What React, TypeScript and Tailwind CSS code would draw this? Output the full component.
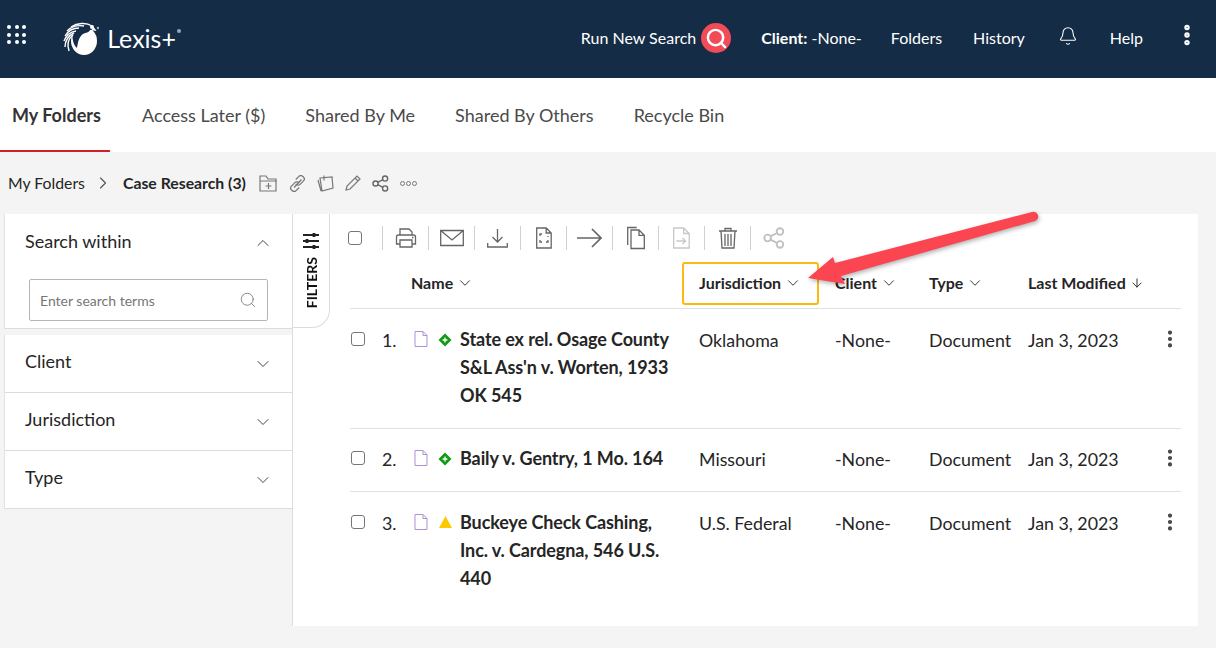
import React from 'react'
import { ChevronDown, ChevronUp, ChevronRight, Search, Bell, EllipsisVertical, ArrowDown } from 'lucide-react'

const rows = [
  { n: '1.', title: "State ex rel. Osage County S&L Ass'n v. Worten, 1933 OK 545", juris: 'Oklahoma', signal: 'green', h: 'h-[120px]', pt: 'pt-[17px]' },
  { n: '2.', title: 'Baily v. Gentry, 1 Mo. 164', juris: 'Missouri', signal: 'green', h: 'h-[63px]', pt: 'pt-[16px]' },
  { n: '3.', title: 'Buckeye Check Cashing, Inc. v. Cardegna, 546 U.S. 440', juris: 'U.S. Federal', signal: 'yellow', h: 'h-[120px]', pt: 'pt-[17px]' },
]

function ToolCell({ children }: { children: React.ReactNode }) {
  return (
    <>
      <span className="w-px h-6 bg-[#d0d0d0] shrink-0" />
      <span className="w-[45px] shrink-0 flex items-center justify-center">{children}</span>
    </>
  )
}

function Check({ className = '' }: { className?: string }) {
  return <span className={`block w-[14px] h-[14px] shrink-0 rounded-[3px] border border-[#767676] bg-white ${className}`} />
}

function Ico({ children, w = 24, h = 24, c = '#666' }: { children: React.ReactNode; w?: number; h?: number; c?: string }) {
  return (
    <svg width={w} height={h} viewBox={`0 0 ${w} ${h}`} fill="none" stroke={c} strokeWidth="1.3">
      {children}
    </svg>
  )
}

function ShareIcon({ c = '#666', size = 24 }: { c?: string; size?: number }) {
  return (
    <svg width={size} height={size} viewBox="0 0 24 24" fill="none" stroke={c} strokeWidth="2">
      <circle cx="18.500" cy="5" r="3.600" />
      <circle cx="5" cy="12" r="3.600" />
      <circle cx="18.500" cy="19" r="3.600" />
      <path d="M8 10.300 15.500 6.600M8 13.700l7.500 3.700" />
    </svg>
  )
}

function FilterRow({ label }: { label: string }) {
  return (
    <div className="h-[58px] border-b border-[#dcdcdc] flex items-center justify-between pl-5 pr-[19px] pb-[4px] text-[18px] text-[#252525]">
      {label}
      <ChevronDown size={20} strokeWidth={1.2} className="text-[#444] mt-[5px]" />
    </div>
  )
}

function HeadCell({ label, className = '' }: { label: string; className?: string }) {
  return (
    <span className={`flex items-center gap-[3px] whitespace-nowrap ${className}`}>
      {label} <ChevronDown size={18} strokeWidth={1.2} />
    </span>
  )
}

function DocIcon() {
  return (
    <svg width="14" height="16" viewBox="0 0 14 16" fill="none" stroke="#b08fd8" strokeWidth="1">
      <path d="M1 .5h8l4 4v11H1zM9 .5v4h4" />
    </svg>
  )
}

function Signal({ kind }: { kind: string }) {
  if (kind === 'yellow') {
    return (
      <svg width="13" height="12" viewBox="0 0 13 12">
        <path d="M6.500 0 13 12H0z" fill="#fcc800" />
      </svg>
    )
  }
  return (
    <svg width="14" height="14" viewBox="0 0 14 14">
      <path d="M7 .5 13.500 7 7 13.500.5 7z" fill="#119a14" />
      <path d="M7 4.600v4.800M4.600 7h4.800" stroke="#fff" strokeWidth="1.300" />
    </svg>
  )
}

function LexisLogo() {
  return (
    <svg width="36" height="34" viewBox="0 0 36 34" className="shrink-0">
      <ellipse cx="21" cy="19" rx="13" ry="14" fill="#fff" />
      <path d="M9 4C14 1 23 0 28 3l3 4-4 1c-1 3-4 2-7 4-3 2-5 6-6 14C9 22 8 11 12 6z" fill="#152c46" />
      <g fill="none" stroke="#fff" strokeWidth="1.400">
        <path d="M8 5c6-4 15-5 21-1l3 4-3-.5" />
        <path d="M4 9c5-5 11-6 17-5" />
        <path d="M2 14c3-5 8-8 14-8" />
        <path d="M1 19c2-5 6-9 12-10" />
        <path d="M2 25c0-6 3-11 9-14" />
        <path d="M6 29C4 23 5 17 10 13" />
      </g>
      <circle cx="29" cy="5" r="2" fill="#fff" />
      <circle cx="35" cy="6" r="1.300" fill="#9aa7b5" />
    </svg>
  )
}

export default function App() {
  return (
    <div className="relative w-[1216px] h-[648px] overflow-hidden bg-[#f4f4f4] font-['Lato',sans-serif] text-[#252525]">
      <header className="h-[78px] bg-[#152c46] flex items-center text-white text-[16px]">
        <div className="ml-[7px] mb-[9px] grid grid-cols-3 gap-x-[3.600px] gap-y-[3.600px]">
          {Array.from({ length: 9 }).map((_, i) => (
            <span key={i} className="w-[4px] h-[4px] rounded-full bg-white" />
          ))}
        </div>
        <span className="ml-[37px] flex"><LexisLogo /></span>
        <span className="ml-[8px] text-[25px] font-normal">Lexis+</span>
        <span className="ml-[1px] mb-[16px] w-[4px] h-[4px] rounded-full bg-[#9aa7b5]" />
        <div className="ml-auto pb-[2px] flex items-center">
          <span>Run New Search</span>
          <span className="ml-[5px] w-[30px] h-[30px] rounded-full bg-[#f04b57] flex items-center justify-center">
            <Search size={23} strokeWidth={2.6} />
          </span>
          <span className="ml-[30px]"><b className="font-bold">Client:</b> -None-</span>
          <span className="ml-[29px]">Folders</span>
          <span className="ml-[31px]">History</span>
          <Bell size={20} strokeWidth={1.3} className="ml-[33px] mb-[4px]" />
          <span className="ml-[32px]">Help</span>
          <EllipsisVertical size={26} strokeWidth={3} className="ml-[31px] mr-[16px] mb-[6px]" />
        </div>
      </header>

      <nav className="h-[74px] bg-white flex text-[18px] text-[#4a4a4a]">
        <div className="pl-3 pt-[2px] w-[110px] flex items-center border-b-2 border-[#d0202e] font-bold text-[#333] whitespace-nowrap">My Folders</div>
        <div className="ml-8 flex items-center gap-10">
          <span>Access Later ($)</span>
          <span>Shared By Me</span>
          <span>Shared By Others</span>
          <span>Recycle Bin</span>
        </div>
      </nav>

      <div className="h-[62px] flex items-center pl-2 text-[15.800px]">
        <span>My Folders</span>
        <ChevronRight size={20} strokeWidth={1.3} className="ml-[8px] text-[#555]" />
        <b className="ml-[10px] font-bold">Case Research (3)</b>
        <div className="ml-[13px] flex items-center gap-[11px]">
          <svg width="19" height="17" viewBox="0 0 19 17" fill="none" stroke="#777" strokeWidth="1.200"><path d="M1 16V1h6l2 3h8v12zM1 6h17M9.500 8v6M6.500 11h6" /></svg>
          <svg width="17" height="17" viewBox="1 1 15 15" fill="none" stroke="#777" strokeWidth="1.100"><path d="M7 5 10 2c2-2 6 2 4 4l-3 3c-1.500 1.500-3 1-4 0M10 12l-3 3c-2 2-6-2-4-4l3-3c1.500-1.500 3-1 4 0" /><path d="M5.500 12 12 5" /></svg>
          <svg width="17" height="17" viewBox="0 0 17 17" fill="none" stroke="#777" strokeWidth="1.200"><path d="M3 3 15 2l1 11-11 3zM1 5l3 11M7 .5v5" /></svg>
          <svg width="16" height="16" viewBox="0 0 16 16" fill="none" stroke="#777" strokeWidth="1.200"><path d="M1 15l1-4L12 1l3 3L5 14zM10 3l3 3" /></svg>
          <ShareIcon size={17} c="#666" />
          <span className="flex gap-[1px]">
            {[0, 1, 2].map((i) => (
              <span key={i} className="w-[5px] h-[5px] rounded-full border border-[#777]" />
            ))}
          </span>
        </div>
      </div>

      <div className="flex items-start pl-[4px]">
        <aside className="w-[288px] bg-white border-l border-[#e2e2e2]">
          <div className="h-[115px] border-b border-[#dcdcdc] px-[24px]">
            <div className="h-[56px] pt-[14px] flex items-start justify-between text-[18px] -ml-[4px] -mr-[5px]">
              Search within
              <ChevronUp size={20} strokeWidth={1.2} className="text-[#444] mt-[5px]" />
            </div>
            <div className="h-[42px] mt-[9px] w-[239px] border border-[#b5b5b5] rounded-[2px] flex items-center justify-between px-[10px] text-[14px] text-[#767676]">
              Enter search terms
              <Search size={18} strokeWidth={1} className="text-[#666]" />
            </div>
          </div>
          <div className="h-[6px] bg-[#f4f4f4] -ml-px" />
          <FilterRow label="Client" />
          <FilterRow label="Jurisdiction" />
          <FilterRow label="Type" />
        </aside>

        <main className="flex-1 mr-[18px] h-[412px] bg-white border-l border-[#dcdcdc] flex">
          <div className="w-[37px] h-[114px] shrink-0 bg-white border-r border-b border-[#dcdcdc] rounded-br-[18px] flex flex-col items-center">
            <svg width="18" height="18" viewBox="0 0 18 18" className="mt-[18px]" fill="none" stroke="#222" strokeWidth="1.800">
              <path d="M1 3h16M1 9h16M1 15h16" />
              <path d="M12 1v4M5 7v4M12 13v4" strokeWidth="2.800" />
            </svg>
            <span className="mt-[7px] text-[14px] font-bold text-[#111] [writing-mode:vertical-rl] rotate-180">FILTERS</span>
          </div>
          <div className="flex-1 pl-[20px] pr-[17px] relative">
            <div className="h-[49px] pb-px flex items-center">
              <Check className="-ml-[2px] mr-[20px]" />
              <ToolCell>
                <Ico w={22}>
                  <path d="M5 9V3h9l3 3v3M5 18H1.500v-7c0-1 1-2 2-2h15c1 0 2 1 2 2v7H17M5 14h12v7H5zM17 11.500h1.500" />
                </Ico>
              </ToolCell>
              <ToolCell>
                <Ico w={24}>
                  <path d="M.7 4.500h22.600v15H.7zM.7 4.500 12 14 23.300 4.500" />
                </Ico>
              </ToolCell>
              <ToolCell>
                <Ico w={21}>
                  <path d="M10.500 3v13M5.500 11l5 5 5-5M.7 17v4h19.600v-4" />
                </Ico>
              </ToolCell>
              <ToolCell>
                <Ico w={16}>
                  <path d="M.7 2h9.500l5 5v15H.7zM10.200 2v5h5M4 10V8h2M4 14v2h2M12 14v2h-2M12 11v-1" />
                </Ico>
              </ToolCell>
              <ToolCell>
                <Ico w={25}>
                  <path d="M0 12h24M15 3l9 9-9 9" strokeWidth="1.700" />
                </Ico>
              </ToolCell>
              <ToolCell>
                <Ico w={18}>
                  <path d="M.7 19V1.500h9M4 4h8l5.300 5.300V22.500H4zM12 4v5.300h5.300" />
                </Ico>
              </ToolCell>
              <ToolCell>
                <Ico w={17} c="#c8c8c8">
                  <path d="M.7 2h10l5.500 5.500V22H.7zM10.700 2v5.500h5.500M3.500 15h9M9.500 12l3 3-3 3" />
                </Ico>
              </ToolCell>
              <ToolCell>
                <Ico w={18}>
                  <path d="M0 5h18M6 5V2.500h6V5M2 5l1 17h12l1-17M6 8v12M9 8v12M12 8v12" />
                </Ico>
              </ToolCell>
              <ToolCell>
                <ShareIcon c="#c0c0c0" size={22} />
              </ToolCell>
            </div>

            <div className="h-[46px] pb-[6px] flex items-center border-b border-[#e0e0e0] text-[16px] font-bold text-[#252525]">
              <HeadCell label="Name" className="ml-[61px] w-[288px]" />
              <HeadCell label="Jurisdiction" className="w-[136px]" />
              <HeadCell label="Client" className="w-[94px]" />
              <HeadCell label="Type" className="w-[99px]" />
              <span className="flex items-center gap-1 whitespace-nowrap">Last Modified <ArrowDown size={14} strokeWidth={1.6} /></span>
            </div>
            <div className="absolute left-[352px] top-[48px] w-[137px] h-[43px] border-2 border-[#fdb913] rounded-[3px]" />

            {rows.map((r, i) => (
              <div key={r.n} className={`${r.h} ${r.pt} flex items-start ${i < 2 ? 'border-b border-[#e0e0e0]' : ''} text-[17.800px] leading-[28px]`}>
                <Check className="mt-[6px] ml-[1px]" />
                <span className="ml-[17px] w-[18px]">{r.n}</span>
                <span className="ml-[14px] mt-[5px] h-[16px] flex"><DocIcon /></span>
                <span className="ml-[10px] mt-[7px] w-[14px] flex justify-center"><Signal kind={r.signal} /></span>
                <span className="ml-[8px] -mt-px w-[239px] pr-[22px] text-[18px] font-bold tracking-[-0.1px] text-[#252525]">{r.title}</span>
                <span className="w-[136px]">{r.juris}</span>
                <span className="w-[94px]">-None-</span>
                <span className="w-[99px]">Document</span>
                <span className="w-[131px] whitespace-nowrap">Jan 3, 2023</span>
                <EllipsisVertical size={22} strokeWidth={2.6} className="mt-[2px] text-[#444]" />
              </div>
            ))}
          </div>
        </main>
      </div>

      <svg width="250" height="90" viewBox="0 0 250 90" className="absolute left-[800px] top-[200px] pointer-events-none drop-shadow-[1px_2px_2px_rgba(0,0,0,0.3)]">
        <path d="M8 78 33 57 35 63 232 12 A4.500 4.500 0 0 1 235 21 L41 76 45 84z" fill="#fb4550" />
      </svg>
    </div>
  )
}
